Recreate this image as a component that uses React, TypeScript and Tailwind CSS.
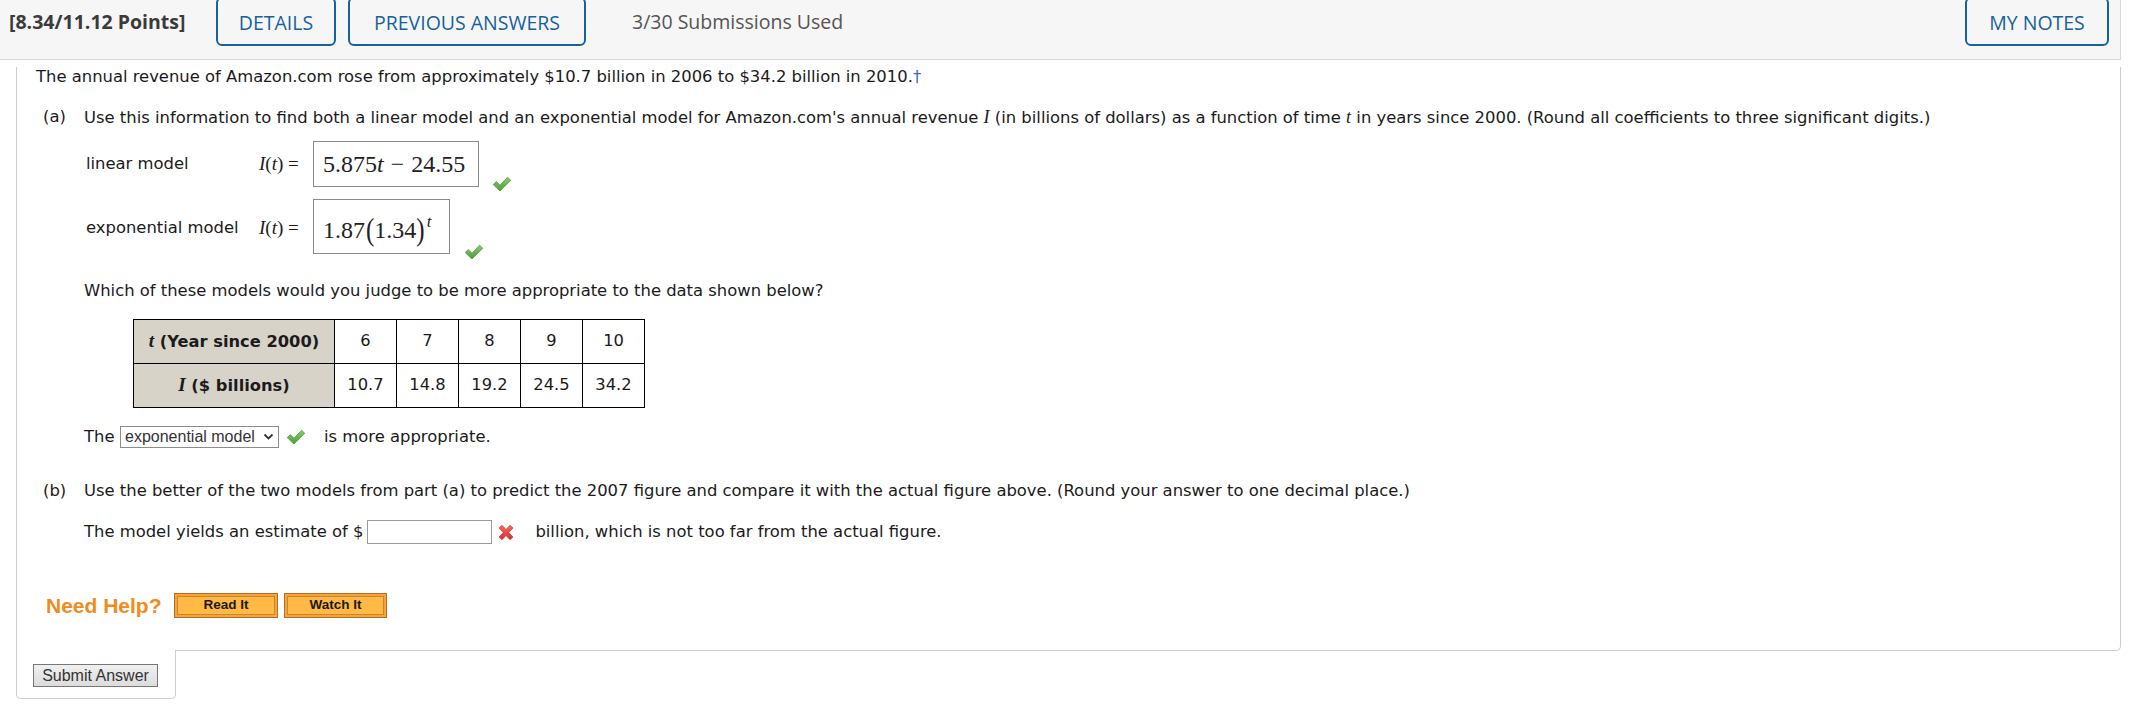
import React from "react";

function Check({ className = "" }: { className?: string }) {
  return (
    <svg width="20" height="16" viewBox="0 0 20 16" className={className}>
      <defs>
        <linearGradient id="gck" x1="0" y1="0" x2="0" y2="1">
          <stop offset="0" stopColor="#86cf6a" />
          <stop offset="1" stopColor="#4c9e3a" />
        </linearGradient>
      </defs>
      <path
        d="M1.2 8.6 L4.3 5.6 L8 9.2 L15.6 1.2 L18.8 4.3 L8 15 Z"
        fill="url(#gck)"
        stroke="#4a8f38"
        strokeWidth="0.7"
        strokeLinejoin="round"
      />
    </svg>
  );
}

function Cross({ className = "" }: { className?: string }) {
  return (
    <svg width="18" height="17" viewBox="0 0 18 17" className={className}>
      <defs>
        <linearGradient id="gcx" x1="0" y1="0" x2="0" y2="1">
          <stop offset="0" stopColor="#f36a5f" />
          <stop offset="1" stopColor="#d3322b" />
        </linearGradient>
      </defs>
      <path
        d="M2 4 L5 1.2 L9 5.4 L13 1.2 L16 4 L11.8 8.5 L16 13 L13 15.8 L9 11.6 L5 15.8 L2 13 L6.2 8.5 Z"
        fill="url(#gcx)"
        stroke="#c12c25"
        strokeWidth="0.6"
        strokeLinejoin="round"
      />
    </svg>
  );
}

function HeaderButton({ label, w }: { label: string; w: string }) {
  return (
    <div
      className={`${w} -mt-[3px] h-[49px] shrink-0 rounded-[6px] border-2 border-[#16629c] flex items-center justify-center pt-[3px] text-[#16629c] text-[19.5px] font-['Open_Sans',sans-serif]`}
    >
      {label}
    </div>
  );
}

export default function App() {
  return (
    <div className="w-[2121px] bg-white text-[#1b1b1b] font-['DejaVu_Sans',Verdana,sans-serif] text-[16.4px]">
      {/* Header */}
      <div className="h-[60px] bg-[#f6f6f6] border-b border-r border-[#dadada] flex items-start">
        <div className="w-[216px] shrink-0 pl-[9px] h-[44px] flex items-center font-['Open_Sans',sans-serif] font-bold text-[19.5px] text-[#3b3b3b]">
          [8.34/11.12 Points]
        </div>
        <HeaderButton label="DETAILS" w="w-[120px]" />
        <div className="w-[12px] shrink-0" />
        <HeaderButton label="PREVIOUS ANSWERS" w="w-[238px]" />
        <div className="ml-[46px] h-[44px] flex items-center font-['Open_Sans',sans-serif] text-[19.5px] text-[#555555]">
          3/30 Submissions Used
        </div>
        <div className="ml-auto mr-[11px]">
          <HeaderButton label="MY NOTES" w="w-[144px]" />
        </div>
      </div>

      {/* Panel */}
      <div className="ml-[16px] border-l border-r border-b border-[#cdcdcd] rounded-br-[5px] pl-[19px] pb-[32px]">
        <div className="mt-[7px] h-[20px] leading-[20px] whitespace-nowrap">
          The annual revenue of Amazon.com rose from approximately $10.7 billion in 2006 to $34.2 billion in 2010.
          <span className="text-[#3f67d0]">†</span>
        </div>

        {/* Part (a) */}
        <div className="ml-[7px] mt-[20px] flex">
          <div className="w-[41px] shrink-0 h-[20px] leading-[20px]">(a)</div>
          <div className="flex-1">
            <div className="h-[20px] leading-[20px] whitespace-nowrap">
              Use this information to find both a linear model and an exponential model for Amazon.com's annual revenue{" "}
              <i className="font-['Liberation_Serif',serif] text-[18px]">I</i> (in billions of dollars) as a function of time{" "}
              <i className="font-['Liberation_Serif',serif] text-[18px]">t</i> in years since 2000. (Round all coefficients to three significant digits.)
            </div>

            {/* linear */}
            <div className="mt-[14px] h-[46px] flex items-center pl-[2px]">
              <div className="w-[173px] shrink-0">linear model</div>
              <div className="w-[54px] shrink-0 font-['Liberation_Serif',serif] text-[19px]">
                <i>I</i>(<i>t</i>) =
              </div>
              <div className="h-[46px] w-[166px] border border-[#8a8a8a] flex items-center pl-[9px] font-['Liberation_Serif',serif] text-[24px] text-[#222] whitespace-nowrap">
                5.875<i>t</i>
                <span className="mx-[7px]">−</span>
                24.55
              </div>
              <Check className="self-end -mb-[5px] ml-[13px]" />
            </div>

            {/* exponential */}
            <div className="mt-[12px] h-[55px] flex items-center pl-[2px]">
              <div className="w-[173px] shrink-0 pt-[4px]">exponential model</div>
              <div className="w-[54px] shrink-0 font-['Liberation_Serif',serif] text-[19px] pt-[4px]">
                <i>I</i>(<i>t</i>) =
              </div>
              <div className="h-[55px] w-[137px] border border-[#8a8a8a] flex items-center pl-[9px] pt-[6px] font-['Liberation_Serif',serif] text-[24px] text-[#222] whitespace-nowrap">
                1.87
                <span className="inline-block scale-y-[1.3] text-[25px] ml-[1px]">(</span>
                1.34
                <span className="inline-block scale-y-[1.3] text-[25px]">)</span>
                <i className="self-start mt-[3px] text-[17px] ml-[2px]">t</i>
              </div>
              <Check className="self-end -mb-[6px] ml-[14px]" />
            </div>

            <div className="mt-[27px] h-[20px] leading-[20px] whitespace-nowrap">
              Which of these models would you judge to be more appropriate to the data shown below?
            </div>

            {/* table */}
            <table className="mt-[18px] ml-[49px] border-collapse text-[16.3px]">
              <tbody>
                <tr className="h-[44px]">
                  <td className="w-[201px] border border-black bg-[#d7d3c9] text-center font-bold whitespace-nowrap">
                    <i className="font-['Liberation_Serif',serif] text-[19px]">t</i> (Year since 2000)
                  </td>
                  {["6", "7", "8", "9", "10"].map((v) => (
                    <td key={v} className="w-[62px] border border-black text-center">
                      {v}
                    </td>
                  ))}
                </tr>
                <tr className="h-[44px]">
                  <td className="border border-black bg-[#d7d3c9] text-center font-bold whitespace-nowrap">
                    <i className="font-['Liberation_Serif',serif] text-[19px]">I</i> ($ billions)
                  </td>
                  {["10.7", "14.8", "19.2", "24.5", "34.2"].map((v) => (
                    <td key={v} className="border border-black text-center">
                      {v}
                    </td>
                  ))}
                </tr>
              </tbody>
            </table>

            <div className="mt-[18px] h-[22px] flex items-center">
              <span className="w-[36px] shrink-0">The</span>
              <div className="h-[22px] w-[159px] border border-[#8c8c8c] bg-white flex items-center pl-[4px] pr-[4px] font-['Liberation_Sans',Arial,sans-serif] text-[16px] text-[#333]">
                <span className="flex-1 whitespace-nowrap">exponential model</span>
                <svg width="11" height="8" viewBox="0 0 11 8">
                  <path d="M1.5 1.5 L5.5 5.5 L9.5 1.5" fill="none" stroke="#333" strokeWidth="1.8" />
                </svg>
              </div>
              <Check className="ml-[7px]" />
              <span className="ml-[18px]">is more appropriate.</span>
            </div>
          </div>
        </div>

        {/* Part (b) */}
        <div className="ml-[7px] mt-[33px] flex">
          <div className="w-[41px] shrink-0 h-[20px] leading-[20px]">(b)</div>
          <div className="flex-1">
            <div className="h-[20px] leading-[20px] whitespace-nowrap">
              Use the better of the two models from part (a) to predict the 2007 figure and compare it with the actual figure above. (Round your answer to one decimal place.)
            </div>
            <div className="mt-[19px] h-[24px] flex items-center whitespace-nowrap">
              <span>The model yields an estimate of $</span>
              <div className="ml-[4px] h-[24px] w-[125px] border border-[#9a9a9a] bg-white" />
              <Cross className="ml-[5px]" />
              <span className="ml-[20px]">billion, which is not too far from the actual figure.</span>
            </div>
          </div>
        </div>

        {/* Need help */}
        <div className="mt-[49px] ml-[10px] h-[25px] flex items-center">
          <span className="w-[128px] shrink-0 font-['Liberation_Sans',Arial,sans-serif] font-bold text-[21px] text-[#f08c1c]">
            Need Help?
          </span>
          <div className="w-[104px] h-[25px] border border-[#b8701e] bg-[#f7a23a] p-[2px]">
            <div className="h-full border border-[#c98630] bg-[#ffb944] flex items-center justify-center font-['Liberation_Sans',Arial,sans-serif] font-bold text-[13.5px] text-[#1a1a1a]">
              Read It
            </div>
          </div>
          <div className="ml-[6px] w-[103px] h-[25px] border border-[#b8701e] bg-[#f7a23a] p-[2px]">
            <div className="h-full border border-[#c98630] bg-[#ffb944] flex items-center justify-center font-['Liberation_Sans',Arial,sans-serif] font-bold text-[13.5px] text-[#1a1a1a]">
              Watch It
            </div>
          </div>
        </div>
      </div>

      {/* Submit tab */}
      <div className="relative -mt-px ml-[16px] w-[160px] border-l border-r border-b border-[#cdcdcd] rounded-b-[5px] bg-white pt-[14px] pb-[11px] pl-[16px]">
        <div className="w-[125px] h-[23px] border border-[#767676] bg-gradient-to-b from-[#f0f0f0] to-[#dcdcdc] flex items-center justify-center font-['Liberation_Sans',Arial,sans-serif] text-[16px] text-[#333]">
          Submit Answer
        </div>
      </div>
    </div>
  );
}
